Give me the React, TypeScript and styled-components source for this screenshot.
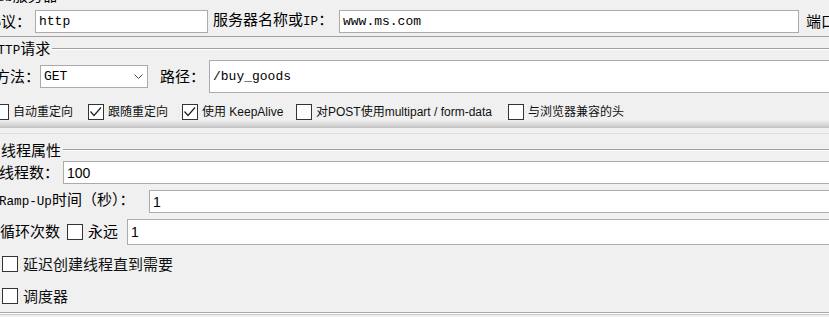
import React from "react";
import styled, { createGlobalStyle } from "styled-components";

const Global = createGlobalStyle`
  html, body { margin: 0; padding: 0; background: #f0f0f0; }
  body { font-family: "Noto Sans CJK SC", sans-serif; color: #000; }
`;

const Viewport = styled.div`
  width: 829px;
  height: 317px;
  overflow: hidden;
  background: #f0f0f0;
`;

const Canvas = styled.div`
  width: 900px;
  margin-left: -15px;
  display: flex;
  flex-direction: column;
`;

const TitleRow = styled.div<{ $mt: number; $pl: number }>`
  display: flex;
  align-items: center;
  height: 16px;
  margin-top: ${(p) => p.$mt}px;
  padding-left: ${(p) => p.$pl}px;
`;

const TitleText = styled.span`
  font-size: 15px;
  line-height: 16px;
  white-space: nowrap;
  padding-right: 2px;
`;

const Etch = styled.div<{ $mt?: number; $light?: boolean }>`
  flex: 1;
  height: 1px;
  margin-top: ${(p) => p.$mt ?? 0}px;
  border-top: 1px solid ${(p) => (p.$light ? "#dedede" : "#a0a0a0")};
  background: #ffffff;
`;

const Row = styled.div<{ $mt: number; $pl: number; $h: number }>`
  display: flex;
  align-items: center;
  height: ${(p) => p.$h}px;
  margin-top: ${(p) => p.$mt}px;
  padding-left: ${(p) => p.$pl}px;
`;

const Label = styled.span<{ $w?: number; $ml?: number }>`
  flex: none;
  font-size: 15px;
  line-height: 16px;
  white-space: nowrap;
  ${(p) => (p.$w ? `width: ${p.$w}px;` : "")}
  margin-left: ${(p) => p.$ml ?? 0}px;
  padding-bottom: 2px;
`;

const Latin = styled.span`
  font-family: "Liberation Mono", monospace;
  font-size: 12.6px;
`;

const TextField = styled.div<{ $w?: number; $h: number; $sans?: boolean }>`
  box-sizing: border-box;
  height: ${(p) => p.$h}px;
  ${(p) => (p.$w ? `width: ${p.$w}px; flex: none;` : "flex: 1;")}
  border: 1px solid #ababab;
  background: #ffffff;
  display: flex;
  align-items: center;
  padding-left: 3px;
  font-family: ${(p) => (p.$sans ? `"Liberation Sans", sans-serif` : `"Liberation Mono", monospace`)};
  font-size: ${(p) => (p.$sans ? 14 : 13)}px;
  color: #000;
  white-space: nowrap;
`;

const Combo = styled.div`
  box-sizing: border-box;
  flex: none;
  width: 108px;
  height: 23px;
  border: 1px solid #ababab;
  background: #ffffff;
  display: flex;
  align-items: center;
  justify-content: space-between;
  padding: 0 4px 0 3px;
  font-family: "Liberation Mono", monospace;
  font-size: 13px;
`;

const Box = styled.span`
  flex: none;
  box-sizing: border-box;
  width: 16px;
  height: 16px;
  border: 1px solid #333333;
  background: #ffffff;
  display: inline-flex;
`;

const CheckItem = styled.label<{ $w?: number; $big?: boolean; $gap?: number }>`
  flex: none;
  display: flex;
  align-items: center;
  gap: ${(p) => p.$gap ?? 4}px;
  ${(p) => (p.$w ? `width: ${p.$w}px;` : "")}
  font-family: ${(p) =>
    p.$big ? `"Noto Sans CJK SC", sans-serif` : `"Liberation Sans", "Noto Sans CJK SC", sans-serif`};
  font-size: ${(p) => (p.$big ? 15 : 12)}px;
  line-height: 16px;
  white-space: nowrap;
  color: #111;
`;

const Shade = styled.div`
  height: 8px;
  background: linear-gradient(to bottom, #f0f0f0 0%, #dadada 55%, #c0c0c0 100%);
`;

const BottomEdge = styled.div`
  margin-top: 8px;
  height: 1px;
  border-top: 1px solid #a8a8a8;
  border-bottom: 1px solid #c6c6c6;
  background: #ffffff;
  box-shadow: inset 0 0 0 0 transparent;
`;

const Spacer1 = styled.div`
  height: 1px;
`;

const Check: React.FC<{ checked?: boolean }> = ({ checked }) => (
  <Box>
    {checked && (
      <svg width="14" height="14" viewBox="0 0 14 14">
        <polyline
          points="1.5,6.5 5,10.5 12,2.5"
          fill="none"
          stroke="#222"
          strokeWidth="1.2"
        />
      </svg>
    )}
  </Box>
);

const Chevron = () => (
  <svg width="9" height="5" viewBox="0 0 9 5">
    <polyline points="0.5,0.5 4.5,4.5 8.5,0.5" fill="none" stroke="#444" strokeWidth="1" />
  </svg>
);

export default function App() {
  return (
    <Viewport>
      <Global />
      <Canvas>
        <TitleRow $mt={-12} $pl={5}>
          <TitleText>
            <Latin>Web</Latin>服务器
          </TitleText>
        </TitleRow>

        <Row $mt={6} $pl={1} $h={23}>
          <Label $w={49}>协议：</Label>
          <TextField $w={173} $h={23}>http</TextField>
          <Label $ml={5} $w={126}>
            服务器名称或<Latin>IP</Latin>：
          </Label>
          <TextField $w={460} $h={23}>www.ms.com</TextField>
          <Label $ml={7}>端口号：</Label>
        </Row>

        <Etch $mt={3} />

        <TitleRow $mt={4} $pl={5}>
          <TitleText>
            <Latin>HTTP</Latin>请求
          </TitleText>
          <Etch />
        </TitleRow>

        <Row $mt={3} $pl={10} $h={33}>
          <Label $w={45}>方法：</Label>
          <Combo>
            <span>GET</span>
            <Chevron />
          </Combo>
          <Label $ml={12} $w={49}>路径：</Label>
          <TextField $h={33}>/buy_goods</TextField>
        </Row>

        <Row $mt={11} $pl={8} $h={16}>
          <CheckItem $w={95}>
            <Check />
            自动重定向
          </CheckItem>
          <CheckItem $w={94}>
            <Check checked />
            跟随重定向
          </CheckItem>
          <CheckItem $w={114}>
            <Check checked />
            使用 KeepAlive
          </CheckItem>
          <CheckItem $w={212}>
            <Check />
            对POST使用multipart / form-data
          </CheckItem>
          <CheckItem>
            <Check />
            与浏览器兼容的头
          </CheckItem>
        </Row>

        <Shade />

        <Etch $mt={5} $light />

        <TitleRow $mt={8} $pl={16}>
          <TitleText>线程属性</TitleText>
          <Etch />
        </TitleRow>

        <Row $mt={3} $pl={14} $h={23}>
          <Label $w={64}>线程数：</Label>
          <TextField $h={23} $sans>100</TextField>
        </Row>

        <Row $mt={6} $pl={14} $h={23}>
          <Label $w={150}>
            <Latin>Ramp-Up</Latin>时间（秒）：
          </Label>
          <TextField $h={23} $sans>1</TextField>
        </Row>

        <Row $mt={6} $pl={15} $h={26}>
          <Label $w={67}>循环次数</Label>
          <Check />
          <Label $ml={5} $w={39}>永远</Label>
          <TextField $h={26} $sans>1</TextField>
        </Row>

        <Row $mt={11} $pl={17} $h={16}>
          <CheckItem $big $gap={5}>
            <Check />
            延迟创建线程直到需要
          </CheckItem>
        </Row>

        <Row $mt={16} $pl={17} $h={16}>
          <CheckItem $big $gap={5}>
            <Check />
            调度器
          </CheckItem>
        </Row>

        <BottomEdge />
        <Spacer1 />
      </Canvas>
    </Viewport>
  );
}
